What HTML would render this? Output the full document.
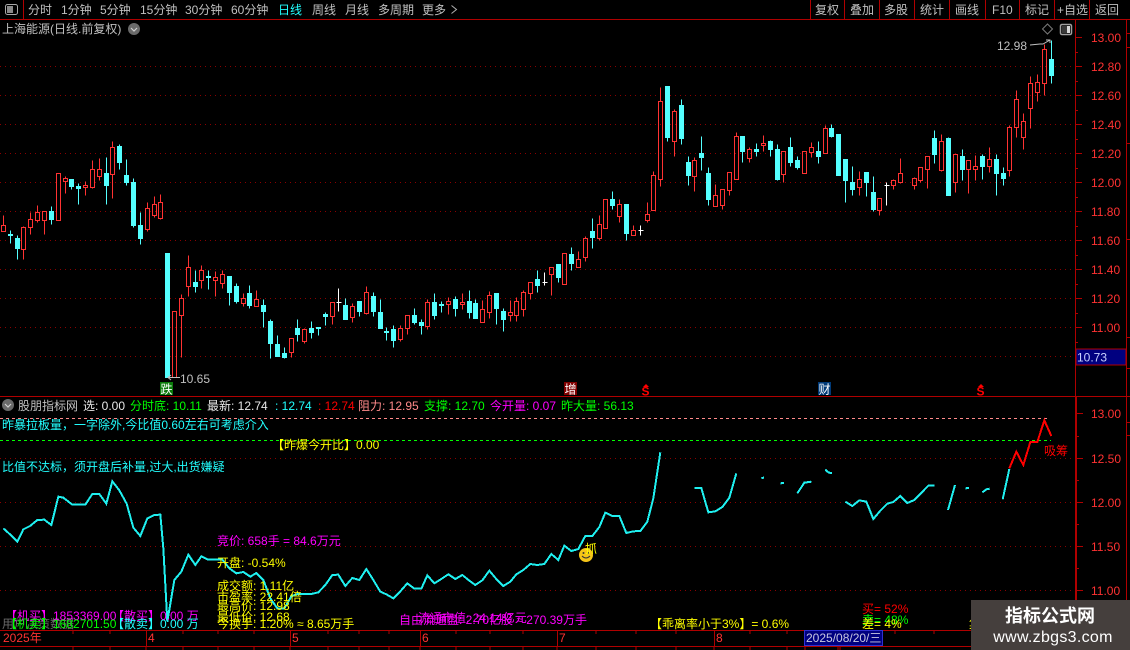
<!DOCTYPE html>
<html lang="zh"><head><meta charset="utf-8"><title>上海能源</title>
<style>
html,body{margin:0;padding:0;background:#000;width:1130px;height:650px;overflow:hidden}
svg{display:block}
text{font-family:"Liberation Sans","WenQuanYi Zen Hei","Noto Sans CJK SC",sans-serif;font-size:12px;white-space:pre}
.g{fill:#c0c0c0}.w{fill:#e8e8e8}.c{fill:#2ff}.y{fill:#ff0}.m{fill:#f0f}.l{fill:#0f0}.r{fill:#ff3232}.p{fill:#ff8a8a}
</style></head><body>
<svg width="1130" height="650" viewBox="0 0 1130 650" xmlns="http://www.w3.org/2000/svg">
<rect width="1130" height="650" fill="#000"/>

<!-- grid main -->
<g stroke="#8a0000" stroke-width="1" stroke-dasharray="1 4" shape-rendering="crispEdges">
<path d="M0 66.5H1075M0 95.5H1075M0 124.5H1075M0 153.5H1075M0 182.5H1075M0 211.5H1075M0 240.5H1075M0 269.5H1075M0 298.5H1075M0 327.5H1075M0 356.5H1075"/>
<path d="M0 458.5H1075M0 502.5H1075M0 546.5H1075M0 590.5H1075"/>
</g>

<!-- candles -->
<g transform="translate(.5 .5)" stroke-width="1" shape-rendering="crispEdges">
<path fill="none" stroke="#ff3232" d="M3 215V225M1 225h4V231h-4zM23 226V227M21 227h4V249h-4zM23 249V259M30 212V219M28 219h4V227h-4zM30 227V234M37 205V212M35 212h4V220h-4zM37 220V222M42 211h4V220h-4zM44 220V234M56 173h4V220h-4zM65 176V178M63 178h4V181h-4zM65 181V193M85 181V185M83 185h4V187h-4zM85 187V195M92 160V169M90 169h4V187h-4zM92 187V188M99 158V169M97 169h4V176h-4zM99 176V180M112 141V147M110 147h4V174h-4zM112 174V198M147 202V208M145 208h4V229h-4zM147 229V231M154 196V204M152 204h4V215h-4zM154 215V217M160 194V202M158 202h4V218h-4zM160 218V219M172 311h4V377h-4zM181 294V298M179 298h4V315h-4zM181 315V357M188 255V267M186 267h4V286h-4zM188 286V296M201 265V270M199 270h4V280h-4zM201 280V288M215 271V277M213 277h4V280h-4zM215 280V296M222 270V274M220 274h4V283h-4zM222 283V288M243 293V298M241 298h4V303h-4zM243 303V306M256 290V299M254 299h4V306h-4zM291 338V338M289 338h4V352h-4zM291 352V357M304 328V329M302 329h4V341h-4zM304 341V343M330 302h4V316h-4zM332 316V324M352 303V306M350 306h4V317h-4zM352 317V322M366 286V292M364 292h4V313h-4zM366 313V314M400 325V328M398 328h4V339h-4zM400 339V341M405 315h4V328h-4zM407 328V334M427 299V302M425 302h4V326h-4zM427 326V329M448 297V301M446 301h4V304h-4zM448 304V314M462 293V302M460 302h4V304h-4zM462 304V309M482 300V309M480 309h4V322h-4zM489 291V295M487 295h4V312h-4zM489 312V318M510 300V312M508 312h4V315h-4zM510 315V321M516 297V301M514 301h4V315h-4zM516 315V321M523 290V292M521 292h4V309h-4zM523 309V316M528 282h4V293h-4zM530 293V299M549 267h4V274h-4zM551 274V295M562 253h4V284h-4zM578 251V259M576 259h4V267h-4zM585 236V238M583 238h4V257h-4zM585 257V261M599 215V224M597 224h4V238h-4zM599 238V240M603 199h4V228h-4zM619 199V204M617 204h4V216h-4zM619 216V222M633 225V230M631 230h4V235h-4zM647 202V214M645 214h4V220h-4zM647 220V222M653 171V175M651 175h4V210h-4zM660 87V101M658 101h4V179h-4zM660 179V186M674 109V111M672 111h4V141h-4zM674 141V156M694 157V160M692 160h4V176h-4zM694 176V191M715 184V195M713 195h4V206h-4zM720 189h4V205h-4zM722 205V209M727 172h4V190h-4zM729 190V195M736 132V136M734 136h4V179h-4zM749 147V149M747 149h4V158h-4zM749 158V162M763 135V143M761 143h4V145h-4zM763 145V151M781 151h4V174h-4zM783 174V182M802 151h4V173h-4zM811 142V147M809 147h4V152h-4zM811 152V157M825 125V128M823 128h4V153h-4zM859 171V179M857 179h4V187h-4zM859 187V195M877 198h4V210h-4zM879 210V215M893 179V180M891 180h4V185h-4zM893 185V189M900 158V173M898 173h4V182h-4zM900 182V183M914 177V178M912 178h4V185h-4zM914 185V189M918 167h4V180h-4zM920 180V182M925 156h4V169h-4zM927 169V188M941 134V141M939 141h4V170h-4zM941 170V171M953 154h4V182h-4zM955 182V192M966 160h4V169h-4zM968 169V193M975 155V166M973 166h4V169h-4zM975 169V180M989 147V159M987 159h4V166h-4zM989 166V172M1009 125V127M1007 127h4V170h-4zM1009 170V176M1016 90V99M1014 99h4V127h-4zM1016 127V137M1023 113V121M1021 121h4V137h-4zM1023 137V149M1030 76V83M1028 83h4V108h-4zM1030 108V128M1037 74V82M1035 82h4V92h-4zM1037 92V101M1044 44V49M1042 49h4V83h-4zM1044 83V95"/>
<path fill="#54ffff" stroke="#54ffff" d="M10 230V243M8 234h4V235h-4zM17 235V259M15 238h4V248h-4zM51 206V224M49 211h4V219h-4zM71 179V189M69 179h4V186h-4zM78 183V204M76 186h4V188h-4zM106 157V204M104 173h4V185h-4zM119 144V169M117 146h4V162h-4zM126 159V185M124 175h4V182h-4zM133 178V227M131 182h4V225h-4zM140 212V244M138 225h4V238h-4zM165 253h4V377h-4zM195 270V292M193 282h4V286h-4zM208 270V289M206 276h4V277h-4zM229 276V305M227 276h4V292h-4zM236 283V303M234 286h4V301h-4zM249 285V308M247 293h4V305h-4zM263 299V327M261 305h4V311h-4zM270 319V358M268 321h4V343h-4zM277 335V356M275 344h4V356h-4zM284 347V358M282 353h4V357h-4zM297 319V341M295 328h4V334h-4zM311 321V338M309 328h4V332h-4zM318 327V335M316 327h4V328h-4zM325 312V325M323 314h4V316h-4zM345 298V319M343 305h4V319h-4zM359 301V316M357 301h4V311h-4zM373 292V316M371 296h4V311h-4zM380 299V328M378 312h4V328h-4zM386 327V340M384 331h4V332h-4zM393 325V347M391 329h4V340h-4zM414 308V324M412 315h4V322h-4zM421 319V334M419 322h4V325h-4zM434 293V319M432 302h4V315h-4zM441 301V312M439 304h4V305h-4zM455 296V316M453 299h4V308h-4zM469 290V318M467 301h4V312h-4zM475 299V318M473 303h4V318h-4zM496 293V324M494 293h4V308h-4zM503 308V331M501 311h4V319h-4zM537 270V292M535 279h4V285h-4zM558 264V282M556 264h4V277h-4zM571 247V270M569 254h4V263h-4zM592 218V248M590 231h4V237h-4zM612 191V209M610 199h4V205h-4zM626 204V240M624 204h4V233h-4zM667 86V141M665 86h4V137h-4zM681 99V144M679 105h4V138h-4zM688 156V185M686 162h4V175h-4zM701 136V170M699 153h4V157h-4zM708 167V205M706 173h4V199h-4zM742 136V162M740 136h4V151h-4zM756 143V156M754 149h4V151h-4zM770 140V156M768 141h4V149h-4zM777 144V180M775 149h4V179h-4zM790 137V166M788 147h4V162h-4zM797 156V169M795 160h4V167h-4zM818 141V163M816 151h4V156h-4zM831 124V137M829 128h4V136h-4zM836 134h4V175h-4zM845 159V202M843 159h4V180h-4zM852 166V195M850 182h4V189h-4zM866 172V196M864 172h4V182h-4zM873 176V211M871 192h4V209h-4zM934 130V163M932 138h4V154h-4zM948 137V195M946 138h4V195h-4zM962 149V180M960 156h4V169h-4zM982 154V179M980 156h4V166h-4zM996 154V195M994 159h4V173h-4zM1003 167V185M1001 173h4V178h-4zM1051 40V83M1049 59h4V75h-4z"/>
<path fill="none" stroke="#fff" d="M338 288V311M336 302h5M544 272V285M542 282h5M640 225V235M638 230h5M886 182V205M884 185h5"/>
</g>

<!-- top bar -->
<g stroke="#b00000" fill="none" shape-rendering="crispEdges">
<path d="M0 19.5H1130M23.5 0V19M810.5 0V19M844.5 0V19M879.5 0V19M914.5 0V19M949.5 0V19M985.5 0V19M1019.5 0V19M1054.5 0V19M1089.5 0V19"/>
</g>
<rect x="5.500" y="4.500" width="12" height="10" rx="2" fill="none" stroke="#a8a8a8"/><rect x="7" y="6" width="6" height="7" fill="#8a8a8a"/>
<text class="g" x="28" y="14">分时</text><text class="g" x="61" y="14">1分钟</text><text class="g" x="100" y="14">5分钟</text><text class="g" x="140" y="14">15分钟</text><text class="g" x="185" y="14">30分钟</text><text class="g" x="231" y="14">60分钟</text><text class="c" x="278" y="14">日线</text><text class="g" x="312" y="14">周线</text><text class="g" x="345" y="14">月线</text><text class="g" x="378" y="14">多周期</text><text class="g" x="422" y="14">更多</text>
<path d="M451.500 5.500l5 4-5 4" fill="none" stroke="#b0b0b0"/>
<text class="g" x="815" y="14">复权</text><text class="g" x="850" y="14">叠加</text><text class="g" x="884" y="14">多股</text><text class="g" x="920" y="14">统计</text><text class="g" x="955" y="14">画线</text><text class="g" x="992" y="14">F10</text><text class="g" x="1025" y="14">标记</text><text class="g" x="1057" y="14">+自选</text><text class="g" x="1095" y="14">返回</text>

<!-- title -->
<text class="g" x="2" y="33">上海能源(日线.前复权)</text>
<circle cx="134" cy="29" r="6" fill="#6a6a6a"/><path d="M131 28l3 3 3-3" fill="none" stroke="#d0d0d0" stroke-width="1.2"/>
<path d="M1047.500 24l5 5-5 5-5-5z" fill="none" stroke="#7a7a7a"/>
<rect x="1060.500" y="24.500" width="11" height="10" rx="1.500" fill="none" stroke="#a0a0a0" stroke-width="1.500"/><rect x="1067" y="26" width="3" height="7" fill="#d8d8d8"/><rect x="1062" y="26" width="5" height="7" fill="#3a3a3a"/>

<!-- annotations -->
<text class="g" x="997" y="50">12.98</text>
<path d="M1030 45l10-1 3 0 7-4M1046 40h4v3" fill="none" stroke="#c0c0c0"/>
<text class="g" x="180" y="383">10.65</text>
<path d="M180 377.500H168M171 375l-3 2.500 3 2.500" fill="none" stroke="#c0c0c0"/>

<!-- marks -->
<rect x="160" y="382" width="13" height="13" fill="#0a7a0a"/><text x="160.500" y="393.500" fill="#fff">跌</text>
<rect x="564" y="382" width="13" height="13" fill="#800000"/><text x="564.500" y="393.500" fill="#fff">增</text>
<rect x="818" y="382" width="13" height="13" fill="#003a78"/><text x="818.500" y="393.500" fill="#fff">财</text>
<path d="M646 384l3 3h-6z" fill="#f00"/><text x="641.500" y="395.500" style="fill:#f00;font-weight:bold;font-size:12px">S</text>
<path d="M981 384l3 3h-6z" fill="#f00"/><text x="976.500" y="395.500" style="fill:#f00;font-weight:bold;font-size:12px">S</text>

<!-- axes -->
<g stroke="#b00000" fill="none" shape-rendering="crispEdges">
<path d="M0 396.500H1130M0 630.500H1130M0 646.500H1130"/>
<path d="M1075.500 20V396M1126.500 20V630"/>
<path stroke-width="2" d="M1076 397V630"/>
<path d="M1075 37.500h7M1075 66.500h7M1075 95.500h7M1075 124.500h7M1075 153.500h7M1075 182.500h7M1075 211.500h7M1075 240.500h7M1075 269.500h7M1075 298.500h7M1075 327.500h7M1075 52.500h3M1075 81.500h3M1075 110.500h3M1075 139.500h3M1075 168.500h3M1075 197.500h3M1075 226.500h3M1075 255.500h3M1075 284.500h3M1075 313.500h3M1075 342.500h3"/>
<path d="M1076 413.500h7M1076 458.500h7M1076 502.500h7M1076 546.500h7M1076 590.500h7M1076 436.500h3M1076 480.500h3M1076 524.500h3M1076 568.500h3"/>
<path d="M1127 33.500h3M1127 47.500h3M1127 143.500h3M1127 239.500h3M1127 337.500h3M1127 368.500h3M1127 422.500h3M1127 435.500h3"/>
<path d="M73 631v3M110 631v3M146.500 631V646M183 631v3M218 631v3M254 631v3M290.500 631V646M328 631v3M359 631v3M389 631v3M420.500 631V646M456 631v3M490 631v3M523 631v3M557.500 631V646M596 631v3M636 631v3M676 631v3M714.500 631V646M750 631v3M787 631v3M895 631v3M934 631v3M73 647v3M110 647v3M146 647v3M183 647v3M218 647v3M254 647v3M290 647v3M328 647v3M359 647v3M389 647v3M420 647v3M456 647v3M490 647v3M523 647v3M557 647v3M596 647v3M636 647v3M676 647v3M714 647v3M750 647v3M787 647v3M805 647v3M838 647v3M840 647v3"/>
</g>
<rect x="1076" y="349" width="50" height="16" fill="#000080" stroke="#b00000"/>
<text x="1077" y="361.500" fill="#c8d0ff">10.73</text>
<text class="r" x="1091" y="42">13.00</text><text class="r" x="1091" y="71">12.80</text><text class="r" x="1091" y="100">12.60</text><text class="r" x="1091" y="129">12.40</text><text class="r" x="1091" y="158">12.20</text><text class="r" x="1091" y="187">12.00</text><text class="r" x="1091" y="216">11.80</text><text class="r" x="1091" y="245">11.60</text><text class="r" x="1091" y="274">11.40</text><text class="r" x="1091" y="303">11.20</text><text class="r" x="1091" y="332">11.00</text>
<text class="r" x="1091" y="418">13.00</text><text class="r" x="1091" y="463">12.50</text><text class="r" x="1091" y="507">12.00</text><text class="r" x="1091" y="551">11.50</text><text class="r" x="1091" y="595">11.00</text>

<!-- sub header -->
<circle cx="8" cy="405" r="6" fill="#6a6a6a"/><path d="M5 404l3 3 3-3" fill="none" stroke="#d0d0d0" stroke-width="1.2"/>
<text class="g" x="18" y="410">股朋指标网</text>
<text class="w" x="83" y="410">选: 0.00</text>
<text class="l" x="130" y="410">分时底: 10.11</text>
<text class="w" x="207" y="410">最新: 12.74</text>
<text class="c" x="275" y="410">: 12.74</text>
<text style="fill:#f00" x="318" y="410">: 12.74</text>
<text class="p" x="358" y="410">阻力: 12.95</text>
<text class="l" x="424" y="410">支撑: 12.70</text>
<text class="m" x="490" y="410">今开量: 0.07</text>
<text class="l" x="561" y="410">昨大量: 56.13</text>

<!-- dashed -->
<g fill="none" shape-rendering="crispEdges" stroke-dasharray="3 3">
<path stroke="#ff8a8a" d="M0 418.500H1050"/>
<path stroke="#0f0" d="M0 440.500H1051"/>
</g>
<text class="c" x="2" y="429">昨暴拉板量，一字除外,今比值0.60左右可考虑介入</text>
<text class="y" x="272" y="449">【昨爆今开比】0.00</text>
<text class="c" x="2" y="471">比值不达标，须开盘后补量,过大,出货嫌疑</text>

<!-- sub line -->
<g fill="none" stroke="#1ff0f0" stroke-width="6" stroke-linejoin="miter" shape-rendering="crispEdges">
<g transform="translate(0 395) scale(.33333)">
<polyline points="10,400 30,418 52,440 70,403 90,393 112,375 133,374 154,390 175,305 190,308 217,329 256,329 277,297 298,297 319,326 337,259 358,286 380,326 400,398 421,423 442,370 463,360 481,359 490,460 502,680 523,555 544,530 565,479 586,510 604,484 625,494 667,494 688,520 709,535 730,531 751,545 769,534 790,555 811,610 832,640 853,640 874,604 892,597 934,597 955,592 976,570 997,540 1015,539 1036,573 1057,549 1078,555 1099,522 1120,555 1141,590 1159,598 1180,610 1200,590"/>
</g>
<g transform="translate(400 395) scale(.33333)">
<polyline points="0,590 22,565 43,581 64,581 82,541 103,565 124,552 145,538 166,552 187,540 208,557 226,570 247,556 268,527 289,552 310,573 331,560 349,538 370,525 391,507 412,510 433,507 454,477 475,495 493,452 514,468 535,462 556,423 577,423 598,396 616,353 637,363 658,363 679,414 700,409 721,408 742,380 760,310 781,172"/>
<polyline points="883,279 904,279 925,352 946,349 967,336 988,308 1009,235"/>
<polyline points="1084,249 1092,248"/>
</g>
<g transform="translate(765 395) scale(.33333)">
<polyline points="46,265 57,264"/>
<polyline points="97,295 118,263 139,260"/>
<polyline points="181,224 190,232 201,235"/>
<polyline points="241,320 262,333 283,316 304,320 325,372 346,347 367,326 385,321 406,303 427,324 448,315 490,272 509,272"/>
<polyline points="549,345 570,270"/>
<polyline points="601,280 612,279"/>
<polyline points="652,292 664,283 674,281"/>
<polyline points="713,313 733,222"/>
<polyline stroke="#f00" points="733,220 754,170 775,210 796,141 817,141 838,76 859,123"/>
</g>
</g>
<text x="1044" y="455" style="fill:#f00">吸筹</text>

<!-- smiley -->
<circle cx="586" cy="555" r="7" fill="#f5c518"/><circle cx="583.500" cy="553" r="1" fill="#333"/><circle cx="588.500" cy="553" r="1" fill="#333"/><path d="M582 556q4 4 8 0" fill="none" stroke="#333"/>
<text class="y" x="585" y="553">抓</text>

<!-- info text -->
<text class="m" x="217" y="545">竞价: 658手 = 84.6万元</text>
<text class="y" x="217" y="567">开盘: -0.54%</text>
<text class="y" x="217" y="590">成交额: 1.11亿</text>
<text class="y" x="217" y="601">市盈率: 22.41倍</text>
<text class="y" x="217" y="610">最高价: 12.98</text>
<text class="y" x="217" y="621">最低价: 12.68</text>
<text class="y" x="217" y="628">今换手: 1.20% ≈ 8.65万手</text>

<text x="2" y="628" style="fill:#6a6a6a">用户决策数据</text>
<text class="m" x="5" y="620">【机买】1853369.00</text>
<text class="m" x="112" y="620">【散买】0.00 万</text>
<text class="l" x="5" y="628">【机卖】1682701.50</text>
<text class="c" x="112" y="628">【散卖】0.00 万</text>

<text class="m" x="399" y="624">自由流通盘: 2.70亿股 ≈ 270.39万手</text>
<text class="m" x="418" y="622">流通市值: 24.14亿元</text>

<text class="y" x="650" y="628">【乖离率小于3%】= 0.6%</text>
<text style="fill:#f00" x="862" y="613">买= 52%</text>
<text class="l" x="862" y="624">卖= 48%</text>
<text class="y" x="862" y="628">差= 4%</text>
<text class="y" x="969" y="628">集</text>

<!-- time axis -->
<text class="r" x="3" y="642">2025年</text>
<text class="r" x="148" y="642">4</text><text class="r" x="292" y="642">5</text><text class="r" x="422" y="642">6</text><text class="r" x="559" y="642">7</text><text class="r" x="716" y="642">8</text>
<rect x="804.500" y="630.500" width="78" height="15" fill="#000080" stroke="#3030d0"/>
<text x="806" y="642" fill="#c8c8e0">2025/08/20/三</text>

<!-- watermark -->
<rect x="971" y="600" width="159" height="50" fill="#453f3d"/>
<text x="1050" y="622" text-anchor="middle" style="font-size:18px;font-weight:bold;fill:#fff;font-family:'Noto Sans CJK SC',sans-serif">指标公式网</text>
<text x="1053" y="642" text-anchor="middle" style="font-size:16px;letter-spacing:.3px;fill:#fff">www.zbgs3.com</text>
</svg>
</body></html>
